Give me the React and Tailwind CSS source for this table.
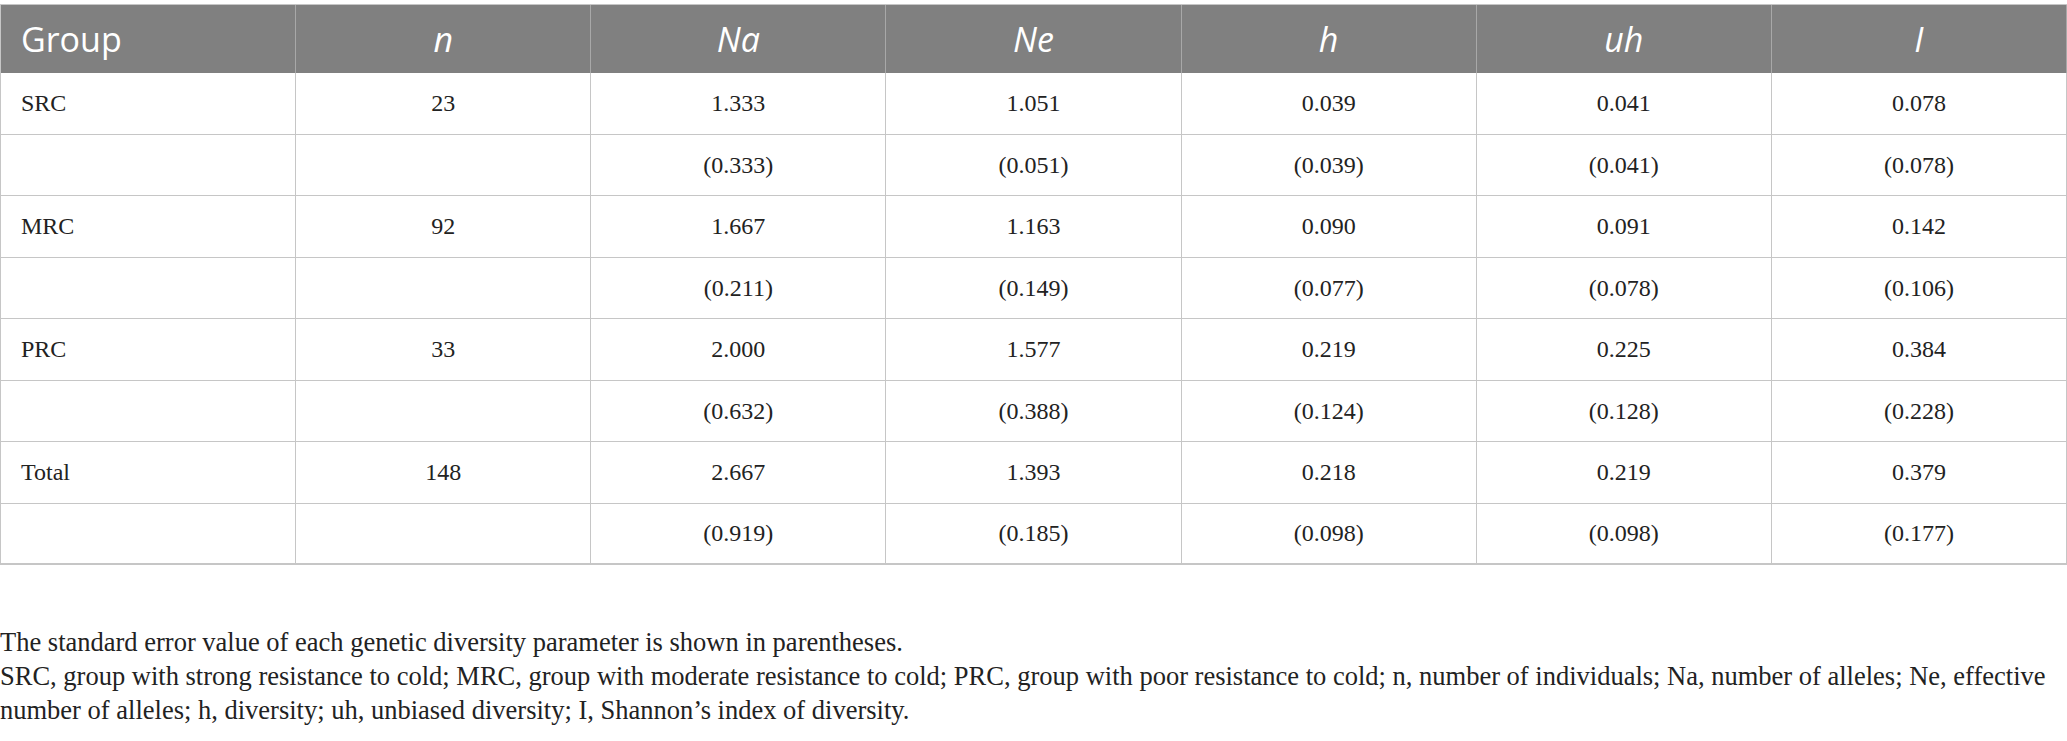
const header = ["Group", "n", "Na", "Ne", "h", "uh", "I"];

const rows = [
  ["SRC", "23", "1.333", "1.051", "0.039", "0.041", "0.078"],
  ["", "", "(0.333)", "(0.051)", "(0.039)", "(0.041)", "(0.078)"],
  ["MRC", "92", "1.667", "1.163", "0.090", "0.091", "0.142"],
  ["", "", "(0.211)", "(0.149)", "(0.077)", "(0.078)", "(0.106)"],
  ["PRC", "33", "2.000", "1.577", "0.219", "0.225", "0.384"],
  ["", "", "(0.632)", "(0.388)", "(0.124)", "(0.128)", "(0.228)"],
  ["Total", "148", "2.667", "1.393", "0.218", "0.219", "0.379"],
  ["", "", "(0.919)", "(0.185)", "(0.098)", "(0.098)", "(0.177)"],
];

export default function App() {
  return (
    <div className="w-[2067px] bg-white pt-[4px] text-[#222]">
      <div className="grid grid-cols-7 border-t border-l border-[#c6c6c6]">
        {header.map((h, i) => (
          <div
            key={h}
            className={`h-[68px] flex items-center bg-[#808080] border-r border-[#a8a8a8] text-white text-[34px] font-['Open_Sans',sans-serif] ${
              i === 0 ? "pl-5" : "justify-center italic"
            }`}
          >
            {h}
          </div>
        ))}
        {rows.map((r, ri) =>
          r.map((c, ci) => (
            <div
              key={ri + "-" + ci}
              className={`h-[61.5px] flex items-center border-r border-b border-[#c6c6c6] text-[24px] font-['Liberation_Serif',serif] ${
                ci === 0 ? "pl-5" : "justify-center"
              } ${ri === rows.length - 1 ? "border-b-2" : ""}`}
            >
              {c}
            </div>
          ))
        )}
      </div>
      <div className="mt-[60px] text-[26.5px] leading-[34px] font-['Liberation_Serif',serif] text-[#222]">
        <p>The standard error value of each genetic diversity parameter is shown in parentheses.</p>
        <p>
          SRC, group with strong resistance to cold; MRC, group with moderate resistance to cold; PRC, group with poor resistance to cold; n, number of individuals; Na, number of alleles; Ne, effective
          <br />
          number of alleles; h, diversity; uh, unbiased diversity; I, Shannon’s index of diversity.
        </p>
      </div>
    </div>
  );
}
